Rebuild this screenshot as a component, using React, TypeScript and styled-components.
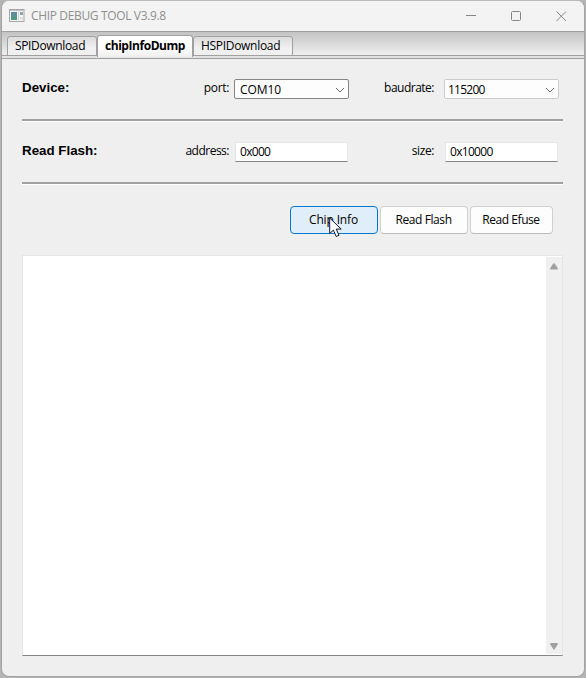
import React from "react";
import styled, { createGlobalStyle } from "styled-components";

const GlobalStyle = createGlobalStyle`
  * { box-sizing: border-box; }
  html, body { margin: 0; padding: 0; background: #b4b4b4; overflow: hidden; }
  body { font-family: "Open Sans", "Noto Sans", sans-serif; font-size: 12px; color: #000; }
`;

const Window = styled.main`
  width: 584px;
  height: 677px;
  margin-left: 1px;
  display: flex;
  flex-direction: column;
  background: #efefef;
  border: 1px solid #a3a3a3;
  border-top-color: #b9b9b9;
  border-radius: 8px;
  overflow: hidden;
`;

const TitleBar = styled.header`
  height: 30px;
  flex: none;
  display: flex;
  align-items: center;
  background: #f3f3f3;
  padding-left: 7px;
`;

const Title = styled.h1`
  flex: 1;
  margin: 0 0 0 6px;
  font-size: 12px;
  font-weight: 400;
  line-height: 28px;
  color: #8f8f8f;
  letter-spacing: -0.35px;
`;

const WindowControls = styled.div`
  display: flex;
  height: 28px;
`;

const ControlButton = styled.button`
  width: 45px;
  padding: 0;
  border: 0;
  background: none;
  display: flex;
  align-items: center;
  justify-content: center;
`;

const TabStrip = styled.nav`
  height: 28px;
  flex: none;
  display: flex;
  padding: 4px 0 0 5px;
  border-top: 1px solid #9f9f9f;
  border-bottom: 1px solid #a0a0a0;
  background: linear-gradient(#c3c3c3 0, #efefef 23px, #a0a0a0 23px, #a0a0a0 24px, #e3e3e3 24px);
`;

const Tab = styled.button<{ $active?: boolean; $width: number; $spacing: number }>`
  width: ${(p) => p.$width}px;
  height: ${(p) => (p.$active ? 22 : 20)}px;
  margin-top: ${(p) => (p.$active ? -1 : 0)}px;
  padding: 0 0 ${(p) => (p.$active ? 3 : 2)}px 7px;
  border: 1px solid #a0a0a0;
  border-bottom: ${(p) => (p.$active ? "0" : "1px solid #a0a0a0")};
  border-radius: 3px 3px 0 0;
  background: ${(p) => (p.$active ? "linear-gradient(#fff 50%, #efefef)" : "linear-gradient(#dcdcdc, #f0f0f0 60%)")};
  font: ${(p) => (p.$active ? 700 : 400)} 12px/17px "Open Sans", "Noto Sans", sans-serif;
  letter-spacing: ${(p) => p.$spacing}px;
  text-align: left;
  white-space: nowrap;
  color: #000;
`;

const Content = styled.section`
  flex: 1;
  display: flex;
  flex-direction: column;
  padding: 0 21px 0 20px;
`;

const SettingsRow = styled.div<{ $height: number }>`
  height: ${(p) => p.$height}px;
  flex: none;
  display: grid;
  grid-template-columns: 140px 67px 5px 115px 85px 10px 115px;
  padding-top: 20px;
  align-items: start;
  border-bottom: 1px solid #fff;
  box-shadow: inset 0 -2px #a0a0a0;
`;

const SectionLabel = styled.h2`
  margin: 0;
  font: 700 13.33px/17px "Liberation Sans", Arial, sans-serif;
  white-space: nowrap;
`;

const FieldLabel = styled.label<{ $spacing: number }>`
  line-height: 17px;
  text-align: right;
  letter-spacing: ${(p) => p.$spacing}px;
  white-space: nowrap;
`;

const Combo = styled.div<{ $strong?: boolean }>`
  height: 20px;
  display: flex;
  align-items: center;
  justify-content: space-between;
  padding: ${(p) => (p.$strong ? "2px 3px 0 5px" : "2px 3px 0 3px")};
  background: #fdfdfd;
  border: 1px solid ${(p) => (p.$strong ? "#858585" : "#cccccc")};
  border-radius: 2px;
`;

const Value = styled.span<{ $spacing: number }>`
  line-height: 18px;
  letter-spacing: ${(p) => p.$spacing}px;
`;

const TextField = styled.div`
  height: 20px;
  margin: 0 1px;
  padding: 0 4px;
  background: #fff;
  border: 1px solid #e6e6e6;
  border-bottom-color: #858585;
`;

const Actions = styled.div`
  display: flex;
  justify-content: flex-end;
  gap: 2px;
  padding: 21px 10px 0 0;
  height: 70px;
  flex: none;
`;

const ActionButton = styled.button<{ $hot?: boolean; $width: number; $spacing: number }>`
  width: ${(p) => p.$width}px;
  height: 28px;
  padding: 0 1px 1px 0;
  border: 1px solid ${(p) => (p.$hot ? "#0078d4" : "#d0d0d0")};
  border-bottom-color: ${(p) => (p.$hot ? "#0078d4" : "#bababa")};
  border-radius: 4px;
  background: ${(p) => (p.$hot ? "#e0eef9" : "#fdfdfd")};
  font: 400 12px/16px "Open Sans", "Noto Sans", sans-serif;
  letter-spacing: ${(p) => p.$spacing}px;
  color: #000;
  white-space: nowrap;
`;

const Log = styled.div`
  height: 401px;
  display: flex;
  justify-content: flex-end;
  background: #fff;
  border: 1px solid #e6e6e6;
  border-bottom-color: #858585;
`;

const ScrollBar = styled.div`
  width: 16px;
  margin: 1px 0 1px 0;
  background: #f0f0f0;
  display: flex;
  flex-direction: column;
  justify-content: space-between;
  align-items: center;
  padding: 6px 0 4px;
`;

const Pointer = styled.svg`
  position: absolute;
  left: 329px;
  top: 217px;
`;

const AppIcon = () => (
  <svg width="16" height="14" viewBox="0 0 16 14">
    <defs>
      <linearGradient id="screen" x2="0" y2="1">
        <stop stopColor="#6687a8" />
        <stop offset="1" stopColor="#4f9c7b" />
      </linearGradient>
    </defs>
    <rect x=".5" y=".5" width="14.5" height="12" fill="#f5f5f5" stroke="#a6a6a6" />
    <path d="M1 1.5h14" stroke="#c5c5c5" />
    <rect x="2" y="3" width="6" height="8" fill="url(#screen)" />
    <rect x="9" y="3" width="1" height="8" fill="#d3d3d3" />
    <rect x="11" y="3" width="3" height="3" fill="#95a4ae" />
    <rect x="11" y="8" width="3" height="3" fill="#e0e0e0" />
  </svg>
);

const Chevron = () => (
  <svg width="10" height="6" viewBox="0 0 10 6" fill="none">
    <path d="M1 1l4 4 4-4" stroke="#6b6b6b" />
  </svg>
);

const Arrow = ({ down }: { down?: boolean }) => (
  <svg width="8" height="7" viewBox="0 0 9 7" preserveAspectRatio="none" fill="#a0a0a0">
    <path d={down ? "M.7 0h7.6q.7.2.5 1.3L5.5 6q-1 1-2 0L.2 1.3Q0 .2.7 0z" : "M.7 6.5h7.6q.7-.2.5-1.3L5.5.8q-1-1-2 0L.2 5.2Q0 6.3.7 6.5z"} />
  </svg>
);

export default function App() {
  return (
    <>
      <GlobalStyle />
      <Window>
        <TitleBar>
          <AppIcon />
          <Title>CHIP DEBUG TOOL V3.9.8</Title>
          <WindowControls>
            <ControlButton aria-label="Minimize">
              <svg width="11" height="11"><path d="M0 4.5h10" stroke="#858585" /></svg>
            </ControlButton>
            <ControlButton aria-label="Maximize">
              <svg width="11" height="11"><rect x=".5" y=".5" width="9" height="9" rx="1" fill="none" stroke="#858585" /></svg>
            </ControlButton>
            <ControlButton aria-label="Close">
              <svg width="11" height="11"><path d="M.5.5l9.5 9.5M10 .5L.5 10" stroke="#858585" /></svg>
            </ControlButton>
          </WindowControls>
        </TitleBar>
        <TabStrip>
          <Tab $width={90} $spacing={-0.35}>SPIDownload</Tab>
          <Tab $active $width={96} $spacing={-0.45}>chipInfoDump</Tab>
          <Tab $width={100} $spacing={-0.3}>HSPIDownload</Tab>
        </TabStrip>
        <Content>
          <SettingsRow $height={63}>
            <SectionLabel>Device:</SectionLabel>
            <FieldLabel $spacing={-0.35}>port:</FieldLabel>
            <span />
            <Combo $strong>
              <Value $spacing={-0.1}>COM10</Value>
              <Chevron />
            </Combo>
            <FieldLabel $spacing={-0.5}>baudrate:</FieldLabel>
            <span />
            <Combo>
              <Value $spacing={-0.75}>115200</Value>
              <Chevron />
            </Combo>
          </SettingsRow>
          <SettingsRow $height={63}>
            <SectionLabel>Read Flash:</SectionLabel>
            <FieldLabel $spacing={-0.5}>address:</FieldLabel>
            <span />
            <TextField><Value $spacing={-0.7}>0x000</Value></TextField>
            <FieldLabel $spacing={-0.4}>size:</FieldLabel>
            <span />
            <TextField><Value $spacing={-0.7}>0x10000</Value></TextField>
          </SettingsRow>
          <Actions>
            <ActionButton $hot $width={88} $spacing={-0.15}>Chip Info</ActionButton>
            <ActionButton $width={88} $spacing={-0.4}>Read Flash</ActionButton>
            <ActionButton $width={83} $spacing={-0.45}>Read Efuse</ActionButton>
          </Actions>
          <Log>
            <ScrollBar>
              <Arrow />
              <Arrow down />
            </ScrollBar>
          </Log>
        </Content>
      </Window>
      <Pointer width="13" height="21" viewBox="0 0 13 21">
        <path d="M.7 1v15.5l3.7-3.4 2.8 6.4 2.8-1.2-2.8-6.2h5z" fill="#fff" stroke="#16162a" />
      </Pointer>
    </>
  );
}
